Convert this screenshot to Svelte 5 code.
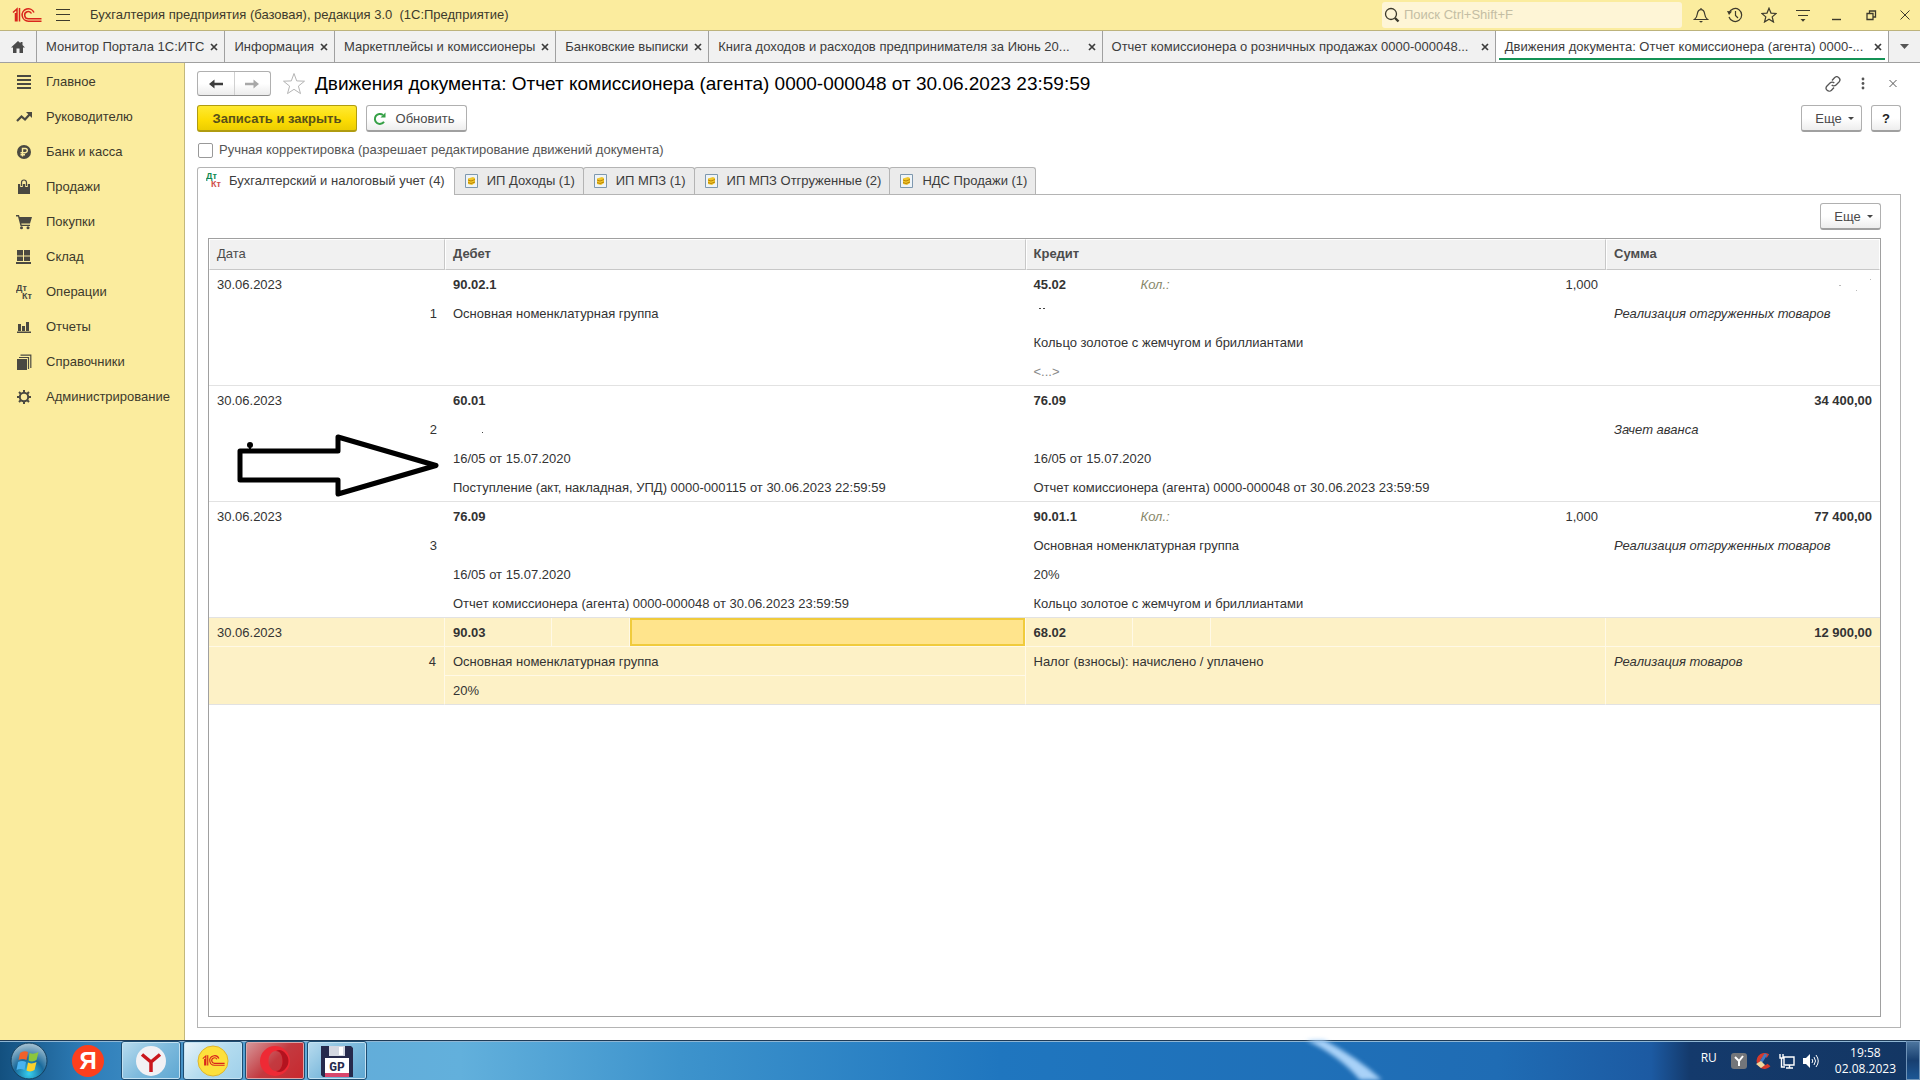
<script>
  const windowTabs = [
    { title: 'Монитор Портала 1С:ИТС' },
    { title: 'Информация' },
    { title: 'Маркетплейсы и комиссионеры' },
    { title: 'Банковские выписки' },
    { title: 'Книга доходов и расходов предпринимателя за Июнь 20...', wide: true },
    { title: 'Отчет комиссионера о розничных продажах 0000-000048...', wide: true },
    { title: 'Движения документа: Отчет комиссионера (агента) 0000-...', wide: true, active: true }
  ];

  const sections = [
    { icon: 'lines', title: 'Главное' },
    { icon: 'trend', title: 'Руководителю' },
    { icon: 'ruble', title: 'Банк и касса' },
    { icon: 'bag', title: 'Продажи' },
    { icon: 'cart', title: 'Покупки' },
    { icon: 'boxes', title: 'Склад' },
    { icon: 'dtkt', title: 'Операции' },
    { icon: 'chart', title: 'Отчеты' },
    { icon: 'books', title: 'Справочники' },
    { icon: 'gear', title: 'Администрирование' }
  ];

  const registers = [
    'Бухгалтерский и налоговый учет (4)',
    'ИП Доходы (1)',
    'ИП МПЗ (1)',
    'ИП МПЗ Отгруженные (2)',
    'НДС Продажи (1)'
  ];

  const entries = [
    {
      date: '30.06.2023',
      debit: { account: '90.02.1', lines: ['Основная номенклатурная группа', '', ''] },
      credit: { account: '45.02', qty: '1,000', lines: ['dots', 'Кольцо золотое с жемчугом и бриллиантами', '<...>'] },
      sum: '',
      note: 'Реализация отгруженных товаров'
    },
    {
      date: '30.06.2023',
      debit: { account: '60.01', lines: ['dot', '16/05 от 15.07.2020', 'Поступление (акт, накладная, УПД) 0000-000115 от 30.06.2023 22:59:59'] },
      credit: { account: '76.09', lines: ['', '16/05 от 15.07.2020', 'Отчет комиссионера (агента) 0000-000048 от 30.06.2023 23:59:59'] },
      sum: '34 400,00',
      note: 'Зачет аванса'
    },
    {
      date: '30.06.2023',
      debit: { account: '76.09', lines: ['', '16/05 от 15.07.2020', 'Отчет комиссионера (агента) 0000-000048 от 30.06.2023 23:59:59'] },
      credit: { account: '90.01.1', qty: '1,000', lines: ['Основная номенклатурная группа', '20%', 'Кольцо золотое с жемчугом и бриллиантами'] },
      sum: '77 400,00',
      note: 'Реализация отгруженных товаров'
    },
    {
      date: '30.06.2023',
      debit: { account: '90.03', lines: ['Основная номенклатурная группа', '20%'] },
      credit: { account: '68.02', lines: ['Налог (взносы): начислено / уплачено'] },
      sum: '12 900,00',
      note: 'Реализация товаров'
    }
  ];

  let register = $state(0);
  let selected = $state(3);
  let manual = $state(false);
  let search = $state('');
</script>

{#snippet logo(width, height)}
  <svg {width} {height} viewBox="0 0 30 16" fill="none" stroke="#d9261c" stroke-width="1.5">
    <path d="M1 5.500l4-3.500v12.500M3.500 6v8.500M7.500 1v13.500" />
    <path d="M22 5.500a6.200 6.200 0 1 0-5.500 8.700H29.500" />
    <path d="M19.500 6.500a3.600 3.600 0 1 0-3 5.200H29.500" />
  </svg>
{/snippet}

{#snippet sectionIcon(name)}
  <svg width="16" height="16" viewBox="0 0 16 16" fill="#4a4941" aria-hidden="true">
    {#if name === 'lines'}
      <path d="M1 1h14v2H1zM1 5h14v2H1zM1 9h14v2H1zM1 13h14v2H1z" />
    {:else if name === 'trend'}
      <path d="M1 12l4.500-4.500 3.500 3L14 5" fill="none" stroke="#4a4941" stroke-width="2.200" />
      <path d="M10 3h6v6z" />
    {:else if name === 'ruble'}
      <circle cx="8" cy="8" r="7" />
      <path d="M6.500 12.500V4.500h2.700a2 2 0 0 1 0 4.200H4.500M4.500 10.700h4.500" fill="none" stroke="#fbec9e" stroke-width="1.400" />
    {:else if name === 'bag'}
      <path d="M2 5h12v10H2z" />
      <path d="M5.500 8V3.500a2.500 2.500 0 0 1 5 0V8" fill="none" stroke="#fbec9e" stroke-width="2.600" />
      <path d="M5.500 7V3.500a2.500 2.500 0 0 1 5 0V7" fill="none" stroke="#4a4941" stroke-width="1.200" />
    {:else if name === 'cart'}
      <path d="M0 1h3l.6 2H16l-2 6.500H5.300l.3 1.200H14V12H4.500L2 2.400H0z" />
      <circle cx="5.500" cy="13.800" r="1.500" />
      <circle cx="12" cy="13.800" r="1.500" />
    {:else if name === 'boxes'}
      <path d="M1 1h6v5.500H1zM8 1h6v5.500H8zM1 7.500h6v4.500H1zM8 7.500h6v4.500H8zM0 13h15v2H0z" />
    {:else if name === 'dtkt'}
      <text x="0" y="7" class="tiny">Дт</text>
      <text x="6" y="15" class="tiny">Кт</text>
    {:else if name === 'chart'}
      <path d="M2 5h3v7H2zM6 7h3v5H6zM10 3h3v9h-3zM1 12.500h14V14H1z" />
    {:else if name === 'books'}
      <path d="M1 5h10v11H1z" />
      <path d="M3 3.500h9.500V15M4.500 1.200h10.300V14" fill="none" stroke="#4a4941" stroke-width="1.200" />
    {:else}
      <circle cx="8" cy="8" r="4.200" fill="none" stroke="#4a4941" stroke-width="2" />
      <path
        d="M8 1v3M8 12v3M1 8h3M12 8h3M3 3l2.200 2.200M10.800 10.800L13 13M13 3l-2.200 2.200M5.200 10.800L3 13"
        stroke="#4a4941"
        stroke-width="2"
      />
    {/if}
  </svg>
{/snippet}

{#snippet account(side)}
  <div class="line account">
    <span class="code">{side.account}</span>
    <span class="qty-label">{side.qty ? 'Кол.:' : ''}</span>
    <span class="qty">{side.qty ?? ''}</span>
  </div>
{/snippet}

{#snippet analytics(lines)}
  {#each lines as text}
    <div class="line">
      {#if text === 'dots'}
        <svg width="16" height="16" fill="#444" aria-hidden="true"><path d="M5 2h2v1H5zM9 2h2v1H9z" /></svg>
      {:else if text === 'dot'}
        <svg width="40" height="16" fill="#444" aria-hidden="true"><path d="M29 10h1v1h-1z" /></svg>
      {:else}
        <span class:muted={text === '<...>'}>{text}</span>
      {/if}
    </div>
  {/each}
{/snippet}

<div class="desktop">
  <header class="titlebar">
    <span class="logo">{@render logo(30, 16)}</span>
    <button class="icon" aria-label="Меню">
      <svg width="16" height="14" stroke="#3d3a2c"><path d="M1 1.500h14M1 6.500h14M1 12.500h14" /></svg>
    </button>
    <span class="app-name">Бухгалтерия предприятия (базовая), редакция 3.0&nbsp; (1С:Предприятие)</span>
    <label class="search">
      <svg width="16" height="16" fill="none" stroke="#3d3a2c" aria-hidden="true">
        <circle cx="7" cy="7" r="5.500" stroke-width="1.300" />
        <path d="M11 11l3.500 3.500" stroke-width="2.400" />
      </svg>
      <input type="text" placeholder="Поиск Ctrl+Shift+F" aria-label="Поиск" bind:value={search} />
    </label>
    <div class="window-tools">
      <button class="icon" aria-label="Уведомления">
        <svg width="16" height="16" fill="none" stroke="#3d3a2c" stroke-width="1.200">
          <path d="M8 1v1.500M1.500 12.500h13c-2-1.500-2.500-3-2.800-5.500C11.300 4 10 2.600 8 2.600S4.700 4 4.300 7c-.3 2.500-.8 4-2.800 5.500z" />
          <path d="M6 14h4l-2 1.800z" fill="#3d3a2c" stroke="none" />
        </svg>
      </button>
      <button class="icon" aria-label="История">
        <svg width="16" height="16" fill="none" stroke="#3d3a2c" stroke-width="1.200">
          <path d="M2 6a6.500 6.500 0 1 1 0 4M8.500 4v4.500l2.500 2.500" />
          <path d="M0 4l5 .5-3 3.500z" fill="#3d3a2c" stroke="none" />
        </svg>
      </button>
      <button class="icon" aria-label="Избранное">
        <svg width="16" height="16" fill="none" stroke="#3d3a2c" stroke-width="1.200">
          <path d="M8 1.200l2 4.900 5.200.4-4 3.400 1.300 5.100L8 12.200 3.500 15l1.300-5.100-4-3.400L6 6.100z" />
        </svg>
      </button>
      <button class="icon" aria-label="Настройки">
        <svg width="16" height="16" stroke="#3d3a2c" stroke-width="1.200">
          <path d="M1 3.500h14M3 8.500h10" />
          <path d="M5.500 12h5L8 14.800z" fill="#3d3a2c" stroke="none" />
        </svg>
      </button>
      <button class="icon" aria-label="Свернуть">
        <svg width="16" height="16" stroke="#3d3a2c"><path d="M3 12.500h9" stroke-width="1.400" /></svg>
      </button>
      <button class="icon" aria-label="Восстановить">
        <svg width="16" height="16" fill="none" stroke="#3d3a2c" stroke-width="1.300">
          <path d="M4 6.500h6v6H4zM6.500 6.500V4h6v6H10" />
        </svg>
      </button>
      <button class="icon" aria-label="Закрыть">
        <svg width="16" height="16" stroke="#3d3a2c"><path d="M3.500 3.500l9 9M12.500 3.500l-9 9" /></svg>
      </button>
    </div>
  </header>

  <nav class="window-tabs" aria-label="Открытые окна">
    <button class="home" aria-label="Начальная страница">
      <svg width="14" height="14" fill="#4a4a4a"><path d="M7 1L0 7.500h2V13h3.500V8.500h3V13H12V7.500h2L11.500 5V2h-2v1.300z" /></svg>
    </button>
    {#each windowTabs as tab}
      <div class="window-tab" class:wide={tab.wide} class:active={tab.active}>
        <button class="tab-title">{tab.title}</button>
        <button class="tab-close" aria-label="Закрыть вкладку">
          <svg width="8" height="8" stroke="#3c3c3c" stroke-width="1.700"><path d="M1 1l6 6M7 1L1 7" /></svg>
        </button>
      </div>
    {/each}
    <button class="tab-list" aria-label="Список окон">
      <svg width="10" height="5" fill="#555"><path d="M0 0h9L4.500 5z" /></svg>
    </button>
  </nav>

  <div class="body">
    <aside class="sections">
      {#each sections as section}
        <a href="#{section.icon}">{@render sectionIcon(section.icon)}<span>{section.title}</span></a>
      {/each}
    </aside>

    <main>
      <div class="heading">
        <div class="history">
          <button aria-label="Назад">
            <svg width="14" height="10" fill="#3c3c3c"><path d="M0 5l5.500-4.500v3.300H14v2.400H5.500v3.300z" /></svg>
          </button>
          <button aria-label="Вперед">
            <svg width="14" height="10" fill="#a8a8a8"><path d="M14 5L8.500.5v3.300H0v2.400h8.500v3.300z" /></svg>
          </button>
        </div>
        <button class="icon" aria-label="В избранное">
          <svg width="24" height="24" fill="none" stroke="#b4b4b4">
            <path d="M12 1.500l2.700 7.400 7.800.3-6.100 4.900 2.100 7.500-6.500-4.300-6.500 4.300 2.100-7.500-6.100-4.900 7.800-.3z" />
          </svg>
        </button>
        <h1>Движения документа: Отчет комиссионера (агента) 0000-000048 от 30.06.2023 23:59:59</h1>
        <div class="form-tools">
          <button class="icon" aria-label="Получить ссылку">
            <svg width="16" height="16" fill="none" stroke="#555" stroke-width="1.300">
              <path d="M7 4.500l2.500-2.700a3 3 0 0 1 4.500 4.200l-3 3a3 3 0 0 1-4.300 0" />
              <path d="M9 11.500l-2.500 2.700A3 3 0 0 1 2 10l3-3a3 3 0 0 1 4.300 0" />
            </svg>
          </button>
          <button class="icon" aria-label="Дополнительно">
            <svg width="16" height="16" fill="#555">
              <circle cx="8" cy="3" r="1.400" /><circle cx="8" cy="7.500" r="1.400" /><circle cx="8" cy="12" r="1.400" />
            </svg>
          </button>
          <button class="icon" aria-label="Закрыть форму">
            <svg width="16" height="16" stroke="#555"><path d="M4.500 4l7 7M11.500 4l-7 7" /></svg>
          </button>
        </div>
      </div>

      <div class="commands">
        <button class="btn primary">Записать и закрыть</button>
        <button class="btn refresh">
          <svg width="14" height="14" fill="none" aria-hidden="true">
            <path d="M11 9.700A5 5 0 1 1 10 3" stroke="#35a046" stroke-width="2" />
            <path d="M7.500 5.500h5V.5z" fill="#35a046" />
          </svg>
          Обновить
        </button>
        <span class="spacer"></span>
        <button class="btn more">Еще <i class="caret"></i></button>
        <button class="btn help">?</button>
      </div>

      <label class="manual">
        <input type="checkbox" bind:checked={manual} />
        Ручная корректировка (разрешает редактирование движений документа)
      </label>

      <div class="register-tabs" role="tablist">
        {#each registers as title, i}
          <button role="tab" aria-selected={register === i} class:active={register === i} onclick={() => (register = i)}>
            {#if i === 0}
              <svg width="16" height="18" aria-hidden="true">
                <text x="0" y="7" class="tiny" fill="#128a52">Дт</text>
                <text x="5" y="15" class="tiny" fill="#d0504c">Кт</text>
              </svg>
            {:else}
              <svg width="13" height="14" aria-hidden="true">
                <path d="M.5.500h12v13H.5z" fill="#eef4f9" stroke="#7e98ae" />
                <path d="M3 4.500l5-1.500 2 1v5l-3 2-4-1z" fill="#f0c62c" />
                <path d="M3 6l3 1 4-1.500M3 8.500l3 1 4-1.500" fill="none" stroke="#b98306" />
              </svg>
            {/if}
            <span>{title}</span>
          </button>
        {/each}
      </div>

      <section class="panel">
        <div class="panel-commands">
          <button class="btn more">Еще <i class="caret"></i></button>
        </div>
        <div class="grid-frame">
          <table>
            <colgroup>
              <col class="col-date" />
              <col />
              <col />
              <col class="col-sum" />
            </colgroup>
            <thead>
              <tr>
                <th class="plain">Дата</th>
                <th>Дебет</th>
                <th>Кредит</th>
                <th>Сумма</th>
              </tr>
            </thead>
            <tbody>
              {#each entries as entry, i}
                <tr class:selected={selected === i} onclick={() => (selected = i)}>
                  <td>
                    <div class="line">{entry.date}</div>
                    <div class="line right">{i + 1}</div>
                  </td>
                  <td class="debit">
                    {@render account(entry.debit)}
                    {@render analytics(entry.debit.lines)}
                  </td>
                  <td>
                    {@render account(entry.credit)}
                    {@render analytics(entry.credit.lines)}
                  </td>
                  <td>
                    <div class="line right sum">
                      {#if entry.sum}
                        {entry.sum}
                      {:else}
                        <svg width="40" height="16" fill="#bbb" aria-hidden="true"><path d="M7 8h2v1H7zM24 13h1v1h-1zM38 2h1v1h-1z" /></svg>
                      {/if}
                    </div>
                    <div class="line note">{entry.note}</div>
                  </td>
                </tr>
              {/each}
            </tbody>
          </table>
          <svg class="arrow" width="204" height="64" aria-hidden="true">
            <path d="M4 18h98V4l98 28.500L102 61V47H4z" fill="#fff" stroke="#000" stroke-width="5" stroke-linejoin="round" />
            <circle cx="14" cy="12" r="3" />
            <path d="M13 12h2v5h-2z" />
          </svg>
        </div>
      </section>
    </main>
  </div>

  <footer class="taskbar">
    <svg class="streak" width="90" height="40" aria-hidden="true">
      <path d="M0 0h18q34 18 58 40H54Q34 16 0 0z" fill="#a9d2f8" />
    </svg>
    <button class="start" aria-label="Пуск">
      <svg width="38" height="38" viewBox="0 0 38 38">
        <defs>
          <radialGradient id="orb" cx="50%" cy="85%" r="80%">
            <stop offset="0" stop-color="#35d0f0" />
            <stop offset=".5" stop-color="#1a6a9c" />
            <stop offset="1" stop-color="#9dbccf" />
          </radialGradient>
        </defs>
        <circle cx="19" cy="19" r="18" fill="url(#orb)" stroke="#15405f" />
        <path d="M10 11q4-3 8-1l-1.500 8q-4-2-8 0z" fill="#f0602a" />
        <path d="M19.500 11q4 2 9-1l-2 8q-4 2.500-8 .5z" fill="#8cc63c" />
        <path d="M8 20q4-2 8 0l-1.500 8q-4-2-8 0z" fill="#49b3f0" />
        <path d="M18 20.500q4 2 8.500-.5l-2 8q-4 2.500-8 .5z" fill="#fcd12c" />
      </svg>
    </button>
    <button class="task yandex" aria-label="Яндекс"><span>Я</span></button>
    <button class="task open" aria-label="Яндекс Браузер">
      <svg width="32" height="32">
        <circle cx="16" cy="16" r="15" fill="#f1f1f4" />
        <path d="M7 9.500l9 7.500 9-7.500M16 16v11" fill="none" stroke="#c9161c" stroke-width="3.500" />
      </svg>
    </button>
    <button class="task open current" aria-label="1С:Предприятие">
      <svg width="32" height="32">
        <circle cx="16" cy="16" r="15" fill="#fde03c" stroke="#dfb42c" />
        <g transform="translate(5 9)">{@render logo(23, 13)}</g>
      </svg>
    </button>
    <button class="task open red" aria-label="Opera">
      <svg width="32" height="32">
        <path
          d="M16 1a15 15 0 1 0 0 30a15 15 0 1 0 0-30zM17 6c4.500 0 6.500 4.500 6.500 10s-2 10-6.500 10-7.500-4.500-7.500-10S12.500 6 17 6z"
          fill="#ee2a35"
          fill-rule="evenodd"
        />
        <path d="M17 6c4.500 0 6.500 4.500 6.500 10s-2 10-6.500 10c3 2 7 1 9.500-2.500 4-4 4-11 0-15C24 5 20 4 17 6z" fill="#b3131f" />
      </svg>
    </button>
    <button class="task open" aria-label="GP">
      <svg width="32" height="32">
        <path d="M0 1h30l2 2v29H2l-2-2z" fill="#262a4c" />
        <path d="M8 1h16v10H8z" fill="#d4d8e2" />
        <path d="M18 2h4v8h-4z" fill="#fff" />
        <path d="M4 13h24v15H4z" fill="#fff" />
        <path d="M4 28h24v4H4z" fill="#d8466c" />
        <text x="16" y="26" text-anchor="middle" class="gp">GP</text>
      </svg>
    </button>
    <span class="spacer"></span>
    <div class="tray">
      <span class="lang">RU</span>
      <svg width="16" height="16"><rect width="16" height="16" rx="3" fill="#74767a" /><path d="M4 4l4 4 4-5M8 8v5" fill="none" stroke="#fff" stroke-width="2" /></svg>
      <svg width="16" height="16">
        <path d="M13 3a6 6 0 1 0 1 9" fill="none" stroke="#d43a2c" stroke-width="4" />
        <path d="M11 1L6 9" stroke="#3f78c2" stroke-width="3" />
        <path d="M1 11l5-3 4 4-4 3z" fill="#eed9a0" />
      </svg>
      <svg width="16" height="16" fill="none" stroke="#fff" stroke-width="1.400"><path d="M5 4h10v8H5zM7 15h7M10.500 12v3M1 1v4h3V1M2.500 5v9H6" /></svg>
      <svg width="16" height="16"><path d="M0 5h3l4-4v14l-4-4H0z" fill="#fff" /><path d="M9 6q1.500 2 0 4M11 4q3 4 0 8M13 2q4.500 6 0 12" fill="none" stroke="#fff" /></svg>
      <div class="clock"><span>19:58</span><span>02.08.2023</span></div>
    </div>
    <button class="show-desktop" aria-label="Показать рабочий стол"></button>
  </footer>
</div>

<style>
  :global(body) {
    margin: 0;
    background: #fff;
  }

  .desktop {
    display: flex;
    flex-direction: column;
    min-height: 100vh;
    font-family: "Liberation Sans", Arial, sans-serif;
    font-size: 13px;
    line-height: 16px;
    color: #3c3c3c;
  }

  .desktop :global(*) {
    box-sizing: border-box;
  }

  svg {
    display: block;
    flex: none;
  }

  button,
  input {
    margin: 0;
    padding: 0;
    font: inherit;
    color: inherit;
  }

  button {
    display: flex;
    align-items: center;
    justify-content: center;
    border: 0;
    background: none;
    white-space: nowrap;
  }

  .spacer {
    flex: 1;
  }

  .tiny {
    font-size: 9px;
    font-weight: bold;
  }

  /* title bar */
  .titlebar {
    display: flex;
    align-items: center;
    height: 31px;
    padding: 0 7px 0 12px;
    border-bottom: 1px solid #bdb37c;
    background: #fbec9e;
  }

  .logo {
    margin-right: 13px;
  }

  .app-name {
    flex: 1;
    margin-left: 19px;
    color: #3d3a2c;
  }

  .search {
    display: flex;
    align-items: center;
    gap: 4px;
    width: 300px;
    height: 26px;
    padding-left: 2px;
    border-radius: 3px;
    background: #fef5d6;
  }

  .search input {
    flex: 1;
    border: 0;
    outline: none;
    background: none;
  }

  .search input::placeholder {
    color: #c4bea4;
    opacity: 1;
  }

  .window-tools {
    display: flex;
    gap: 18px;
    margin-left: 11px;
  }

  /* open windows */
  .window-tabs {
    display: flex;
    height: 32px;
    border-bottom: 1px solid #a0a0a0;
    background: #f1f1f1;
  }

  .home {
    width: 37px;
    border-right: 1px solid #a0a0a0;
  }

  .window-tab {
    position: relative;
    display: flex;
    align-items: center;
    gap: 6px;
    padding: 0 6px 0 9px;
    border-right: 1px solid #a0a0a0;
  }

  .window-tab.wide {
    flex: 1;
    min-width: 0;
  }

  .wide .tab-title {
    flex: 1;
    justify-content: flex-start;
  }

  .window-tab.active {
    background: #fff;
  }

  .window-tab.active::after {
    content: "";
    position: absolute;
    right: 3px;
    bottom: 2px;
    left: 3px;
    height: 2px;
    background: #149255;
  }

  .tab-list {
    width: 31px;
  }

  /* sections */
  .body {
    display: flex;
    flex: 1;
  }

  .sections {
    flex: none;
    width: 185px;
    padding-top: 1px;
    border-right: 1px solid #c3b87c;
    background: #fbec9e;
  }

  .sections a {
    display: flex;
    align-items: center;
    gap: 14px;
    height: 35px;
    padding-left: 16px;
    color: #3d3a2c;
    text-decoration: none;
  }

  /* form */
  main {
    display: flex;
    flex: 1;
    flex-direction: column;
    min-width: 0;
    padding: 8px 19px 12px 12px;
  }

  .heading {
    display: flex;
    align-items: center;
    height: 25px;
  }

  .history {
    display: flex;
    width: 74px;
    height: 25px;
    margin-right: 11px;
    border: 1px solid #b0b0b0;
    border-bottom-color: #8f8f8f;
    border-radius: 3px;
    background: linear-gradient(#fff 50%, #ececec);
  }

  .history button {
    flex: 1;
  }

  .history button + button {
    border-left: 1px solid #d0d0d0;
  }

  h1 {
    flex: 1;
    margin: 0 0 0 9px;
    font-size: 19px;
    font-weight: normal;
    line-height: 24px;
    color: #000;
  }

  .form-tools {
    display: flex;
    gap: 14px;
  }

  .commands {
    display: flex;
    gap: 9px;
    margin-top: 9px;
  }

  .btn {
    height: 27px;
    padding-top: 1px;
    border: 1px solid #b0b0b0;
    border-bottom: 2px solid #a0a0a0;
    border-radius: 3px;
    background: linear-gradient(#fff 50%, #ededed);
    color: #4a4a4a;
  }

  .primary {
    width: 160px;
    border-color: #b09c10;
    background: linear-gradient(#ffea32, #fcdc04 60%, #eccd00);
    font-weight: bold;
    color: #57501a;
  }

  .refresh {
    gap: 9px;
    width: 101px;
    padding-right: 6px;
  }

  .more {
    gap: 6px;
    width: 61px;
    padding-left: 6px;
  }

  .caret {
    border: 3px solid transparent;
    border-top-color: #444;
    border-bottom: 0;
  }

  .help {
    width: 30px;
    font-weight: bold;
    color: #222;
  }

  .manual {
    display: flex;
    align-items: center;
    gap: 6px;
    margin-top: 10px;
    color: #555;
  }

  .manual input {
    width: 15px;
    height: 15px;
    margin-left: 1px;
    border: 1px solid #999;
    border-radius: 2px;
    background: #fff;
    appearance: none;
  }

  .manual input:checked {
    background: #149255;
  }

  .register-tabs {
    display: flex;
    margin-top: 9px;
  }

  .register-tabs button {
    gap: 9px;
    height: 27px;
    margin-left: -1px;
    padding: 0 8px 0 10px;
    border: 1px solid #b4b4b4;
    border-bottom: 0;
    border-radius: 3px 3px 0 0;
    background: #ebebeb;
  }

  .register-tabs button.active {
    z-index: 1;
    gap: 7px;
    height: 28px;
    margin: 0 0 -1px;
    padding: 0 9px 1px 8px;
    background: #fff;
  }

  .panel {
    display: flex;
    flex: 1;
    flex-direction: column;
    padding: 8px 19px 10px 10px;
    border: 1px solid #b4b4b4;
  }

  .panel-commands {
    display: flex;
    justify-content: flex-end;
    margin-bottom: 8px;
  }

  .grid-frame {
    position: relative;
    flex: 1;
    border: 1px solid #a0a0a0;
  }

  table {
    width: 100%;
    border-collapse: separate;
    border-spacing: 0;
    table-layout: fixed;
  }

  .col-date {
    width: 236px;
  }

  .col-sum {
    width: 274px;
  }

  th {
    height: 31px;
    padding: 0 7px 2px;
    border: 1px solid #fff;
    border-right-color: #c8c8c8;
    border-bottom-color: #c8c8c8;
    background: #f1f1f1;
    text-align: left;
    color: #4c4c4c;
  }

  th:last-child {
    border-right-color: #fff;
  }

  th.plain {
    font-weight: normal;
  }

  td {
    padding: 0;
    border-bottom: 1px solid #e2e2e2;
    vertical-align: top;
    color: #333;
  }

  .line {
    display: flex;
    align-items: center;
    height: 29px;
    padding: 0 8px;
    line-height: 29px;
    white-space: nowrap;
  }

  .line:last-child {
    height: 28px;
  }

  .right {
    justify-content: flex-end;
  }

  .account {
    align-items: stretch;
    padding: 0;
  }

  .code {
    width: 107px;
    padding-left: 8px;
    font-weight: bold;
  }

  .qty-label {
    width: 78px;
    padding-left: 8px;
    font-style: italic;
    color: #87876a;
  }

  .qty {
    flex: 1;
    padding-right: 8px;
    text-align: right;
  }

  .muted {
    color: #888;
  }

  .sum {
    font-weight: bold;
  }

  .note {
    font-style: italic;
  }

  .selected td {
    background: #fdf1c6;
  }

  .selected td:not(:last-child) {
    border-right: 1px solid #fff9e6;
  }

  .selected .line:not(:last-child) {
    border-bottom: 1px solid #fff9e6;
  }

  .selected .code,
  .selected .qty-label {
    border-right: 1px solid #fff9e6;
  }

  .selected .debit .qty {
    border: 2px solid #f0cb3c;
    background: #ffe48c;
  }

  .arrow {
    position: absolute;
    top: 194px;
    left: 27px;
  }

  /* taskbar */
  .taskbar {
    position: relative;
    display: flex;
    height: 40px;
    border-top: 1px solid #1f3b57;
    background: linear-gradient(90deg, #13507f 0, #2f7fba 90px, #62abd8 300px, #62b0dc 460px, #3d93cc 680px, #1f76bf 1000px, #1f6cb4 78%, #1c5aa2 86%, #143a6c 88%, #133663);
    box-shadow: inset 0 1px 0 #8fb6d4;
    color: #fff;
  }

  .streak {
    position: absolute;
    bottom: 0;
    left: 68%;
    filter: blur(2px);
  }

  .start {
    width: 57px;
  }

  .task {
    width: 60px;
    margin-right: 2px;
    border-radius: 3px;
  }

  .yandex {
    width: 62px;
  }

  .yandex span {
    width: 32px;
    border-radius: 50%;
    background: #fc3f1d;
    font-size: 24px;
    font-weight: bold;
    line-height: 32px;
  }

  .open {
    border: 1px solid #1d4d72;
    background: linear-gradient(135deg, #b9dcef, #7fbbdd 50%, #5ea7d2);
    box-shadow: inset 0 0 0 1px #c4e2f2;
  }

  .current {
    background: linear-gradient(135deg, #e8f3f9, #b4dcef 50%, #9fd0ea);
  }

  .red {
    background: linear-gradient(135deg, #d79a9c, #c33a40 50%, #c8282e);
    box-shadow: inset 0 0 0 1px #dba7aa;
  }

  .gp {
    font-family: "Liberation Mono", monospace;
    font-size: 13px;
    font-weight: bold;
    fill: #262a4c;
  }

  .tray {
    display: flex;
    align-items: center;
    gap: 8px;
    font-family: "Open Sans", "Noto Sans", sans-serif;
    font-size: 12px;
  }

  .lang {
    margin-right: 6px;
    padding-bottom: 6px;
  }

  .clock {
    display: flex;
    flex-direction: column;
    align-items: center;
    margin: 0 10px 0 8px;
  }

  .show-desktop {
    width: 14px;
    border: 1px solid #6f93b8;
    background: linear-gradient(#4c759e, #173f70 50%, #1d5795);
  }
</style>
